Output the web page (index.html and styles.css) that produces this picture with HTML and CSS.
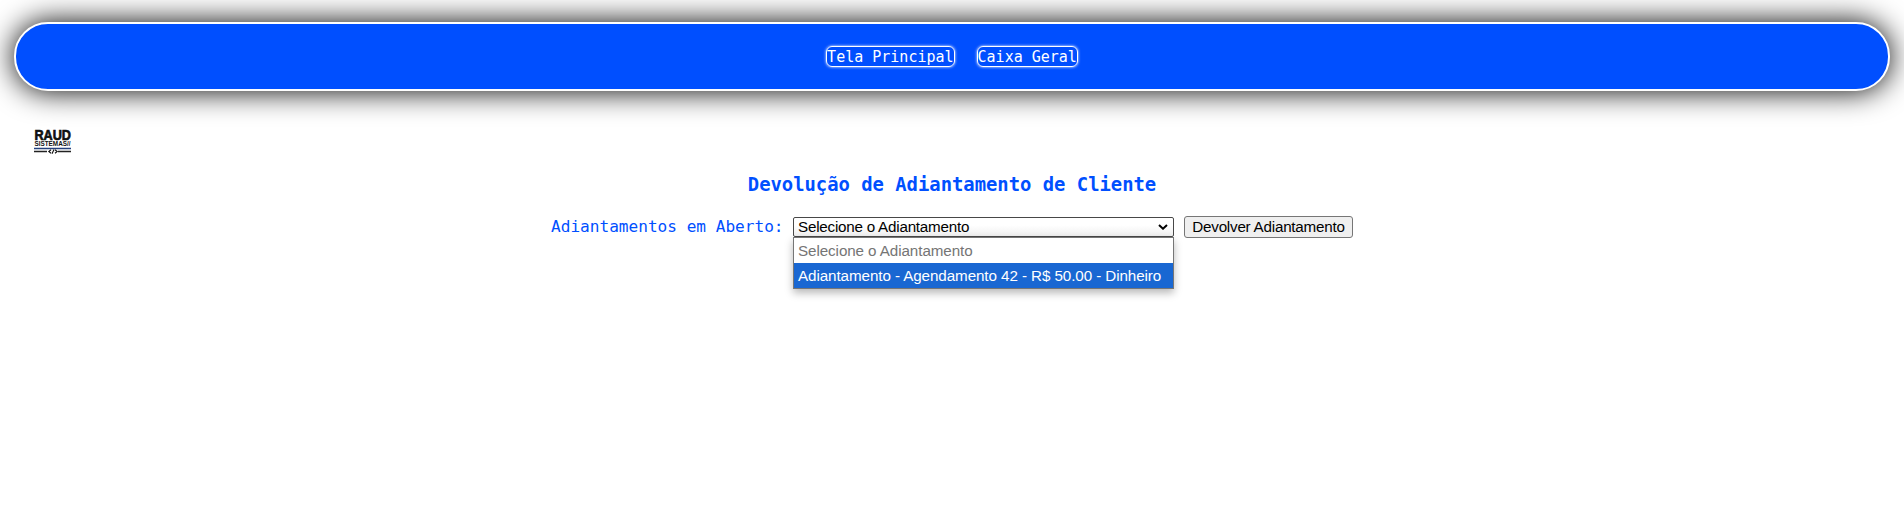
FILE: index.html
```html
<!DOCTYPE html>
<html lang="pt-BR">
<head>
<meta charset="utf-8">
<title>Devolução de Adiantamento</title>
<link rel="stylesheet" href="styles.css">
</head>
<body>
<nav class="menu">
  <a class="menu-link">Tela Principal</a>
  <a class="menu-link">Caixa Geral</a>
</nav>
<svg class="logo" viewBox="0 0 38 26">
  <text class="logo-name" x="0.5" y="11" textLength="36.5" lengthAdjust="spacingAndGlyphs">RAUD</text>
  <text class="logo-sub" x="0.5" y="17.2" textLength="36" lengthAdjust="spacingAndGlyphs">SISTEMAS//</text>
  <path d="M0 19.5H37" stroke="#24407c" stroke-width="1.4"/>
  <path d="M0 22.5H13M24 22.5H37" stroke="#222" stroke-width="1.4"/>
  <path d="M17 20.7L14.8 22.5L17 24.3M20 20.5L18 24.7M21 20.7L23.2 22.5L21 24.3" fill="none" stroke="#111" stroke-width="1.1"/>
</svg>
<main class="content">
  <h1 class="title">Devolução de Adiantamento de Cliente</h1>
  <div class="form">
    <span class="label">Adiantamentos em Aberto:</span>
    <div class="select">
      <span class="select-value">Selecione o Adiantamento</span>
      <svg class="chevron" viewBox="0 0 10 6"><path d="M1 1L5 4.7L9 1" fill="none" stroke="#000" stroke-width="2"/></svg>
      <div class="options">
        <div class="option option-disabled"><span>Selecione o Adiantamento</span></div>
        <div class="option option-active"><span>Adiantamento - Agendamento 42 - R$ 50.00 - Dinheiro</span></div>
      </div>
    </div>
    <button class="submit">Devolver Adiantamento</button>
  </div>
</main>
</body>
</html>
```
FILE: styles.css
```css
* { box-sizing: border-box; }
body {
  margin: 0;
  padding: 22px 14px 0;
  background: #fff;
  font-family: Consolas, "DejaVu Sans Mono", monospace;
  color: #004fff;
  height: 518px;
  overflow: hidden;
}
.menu {
  display: flex;
  justify-content: center;
  gap: 22px;
  height: 69px;
  padding-top: 22px;
  background: #004fff;
  border: 2px solid #fff;
  border-radius: 34px;
  box-shadow: 0 0 30px #000;
}
.menu-link {
  height: 21px;
  border: 1px solid #fff;
  border-radius: 6px;
  box-shadow: 0 0 3px #fff;
  color: #fff;
  font-size: 15px;
  line-height: 21px;
  white-space: nowrap;
}
.logo {
  display: block;
  width: 38px;
  height: 26px;
  margin: 38px 0 0 20px;
  overflow: visible;
}
.logo-name, .logo-sub {
  font-family: "Liberation Sans", Arial, sans-serif;
  font-weight: bold;
  fill: #111;
}
.logo-name { font-size: 14.5px; stroke: #111; stroke-width: .7px; }
.logo-sub { font-size: 6.6px; }
.content { padding-top: 18px; }
.title {
  margin: 0;
  height: 24px;
  font-size: 18.85px;
  line-height: 24px;
  text-align: center;
  white-space: nowrap;
}
.form {
  display: flex;
  justify-content: center;
  height: 22px;
  margin-top: 19px;
}
.label {
  width: 242px;
  font-size: 16.1px;
  line-height: 22px;
  white-space: nowrap;
}
.select {
  position: relative;
  display: flex;
  align-items: center;
  justify-content: space-between;
  width: 381px;
  height: 20px;
  margin: 1px 10px 0 0;
  padding: 0 5px 0 4px;
  border: 1px solid #484848;
  border-radius: 2px;
  background: linear-gradient(#fff 40%, #efefef);
  color: #000;
  font: 15.2px/18px "Liberation Sans", Arial, sans-serif;
}
.select-value { letter-spacing: -.22px; }
.chevron { width: 10px; height: 6px; }
.options {
  position: absolute;
  top: 19px;
  left: -1px;
  width: 381px;
  border: 1px solid #767676;
  background: #fff;
  box-shadow: 0 4px 8px rgba(0, 0, 0, .28);
}
.option {
  height: 25px;
  padding-left: 4px;
  font-size: 15.2px;
  letter-spacing: -.08px;
  line-height: 25px;
  white-space: nowrap;
}
.option-disabled { color: #757575; }
.option-active { background: #1967d2; color: #fff; }
.submit {
  width: 169px;
  height: 22px;
  padding: 0;
  border: 1px solid #767676;
  border-radius: 3px;
  background: #efefef;
  color: #000;
  font: 15.2px/20px "Liberation Sans", Arial, sans-serif;
  letter-spacing: -.22px;
  white-space: nowrap;
}
```
